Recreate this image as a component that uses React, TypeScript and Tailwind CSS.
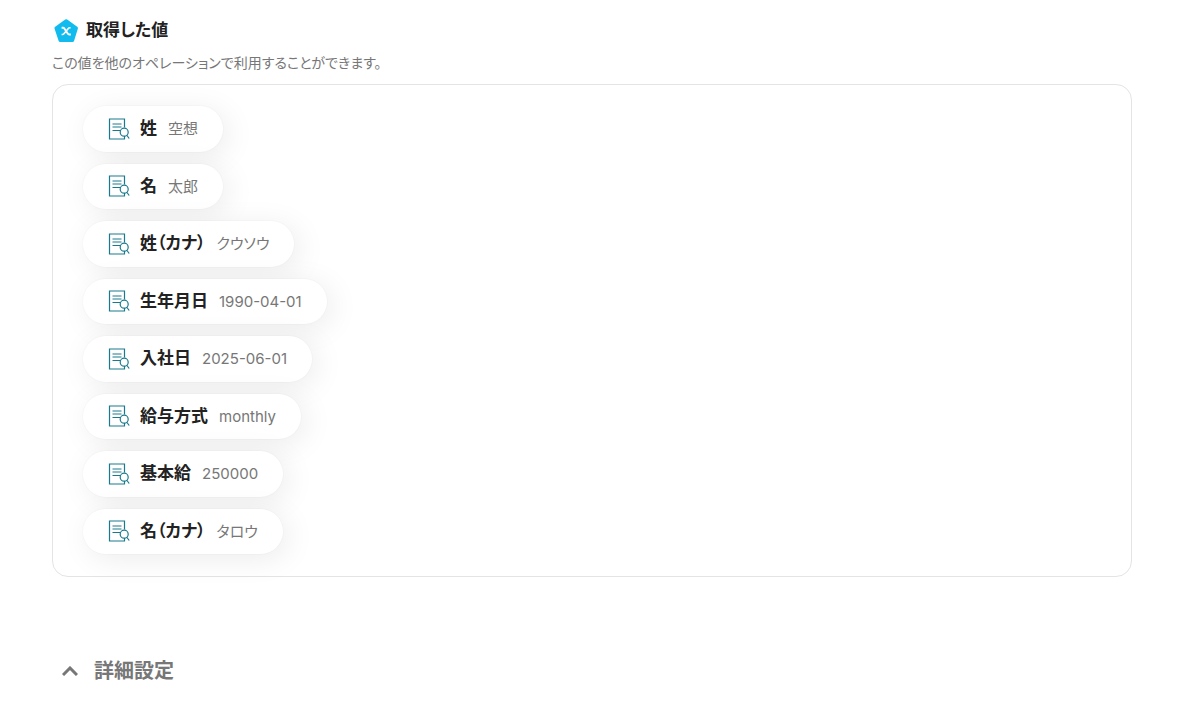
import React from "react";

type Item = { label: string; value: string };

const items: Item[] = [
  { label: "姓", value: "空想" },
  { label: "名", value: "太郎" },
  { label: "姓（カナ）", value: "クウソウ" },
  { label: "生年月日", value: "1990-04-01" },
  { label: "入社日", value: "2025-06-01" },
  { label: "給与方式", value: "monthly" },
  { label: "基本給", value: "250000" },
  { label: "名（カナ）", value: "タロウ" },
];

const VariableIcon: React.FC = () => (
  <svg viewBox="0 0 24 24" className="size-6 shrink-0" aria-hidden="true">
    <path
      d="M12.2 3 22.2 10.2 18.5 22.3H6.2L2.2 10.2Z"
      fill="#12bbee"
      stroke="#12bbee"
      strokeWidth="3.4"
      strokeLinejoin="round"
    />
    <path
      d="M7.6 9.8h1.4c.7 0 1.1.3 1.5.9l3.2 4.9c.4.6.8.9 1.500.9h1.600"
      fill="none"
      stroke="#fff"
      strokeWidth="1.9"
    />
    <path
      d="M16.600 9.800h-.9c-.7 0-1.100.3-1.600.9l-4 4.900c-.5.6-.9.9-1.600.9h-.9"
      fill="none"
      stroke="#fff"
      strokeWidth="1.6"
    />
  </svg>
);

const RecordIcon: React.FC = () => (
  <svg
    viewBox="0 0 22 22"
    className="size-[22px] shrink-0"
    fill="none"
    stroke="#1a7a8c"
    strokeWidth="1.2"
    aria-hidden="true"
  >
    <path d="M16.5 9.5V1H1.5v20h15v-3" />
    <path d="M4.5 6h9M4.5 9h9M4.5 12.5h7.5" />
    <circle cx="16.2" cy="14.2" r="4" />
    <path d="m19 17.5 2.2 3" />
  </svg>
);

const ValuePill: React.FC<Item> = ({ label, value }) => (
  <li className="flex items-center rounded-full bg-white px-[25px] py-2.5 shadow-[0_0_0_1px_rgba(0,0,0,0.015),5px_5px_30px_rgba(0,0,0,0.08)]">
    <RecordIcon />
    <span className="ml-2.5 text-[17px] leading-normal font-bold text-[#222]">{label}</span>
    <span className="ml-[11px] text-[15px] leading-none text-[#777]">{value}</span>
  </li>
);

export default function App() {
  return (
    <main className="pt-4 pr-[63px] pl-[52px] font-['Inter','Noto_Sans_CJK_JP',sans-serif] text-[#222] [font-feature-settings:'palt']">
      <section>
        <h2 className="flex items-center gap-2 pl-0.5 text-[17px] leading-7 font-bold">
          <VariableIcon />
          取得した値
        </h2>
        <p className="mt-[9px] text-[14px] leading-5 text-[#777]">
          この値を他のオペレーションで利用することができます。
        </p>
        <ul className="mt-[11px] flex flex-col items-start gap-3 rounded-2xl border border-[#e4e4e4] px-[30px] pt-[21px] pb-[22px]">
          {items.map((item) => (
            <ValuePill key={item.label} {...item} />
          ))}
        </ul>
      </section>

      <button type="button" className="mt-20 flex items-center gap-4 pl-2.5 text-[20px] leading-7 font-bold text-[#777]">
        <svg viewBox="0 0 16 10" className="w-4" fill="none" stroke="currentColor" strokeWidth="3" aria-hidden="true">
          <path d="m1 9 7-7 7 7" />
        </svg>
        詳細設定
      </button>
    </main>
  );
}
